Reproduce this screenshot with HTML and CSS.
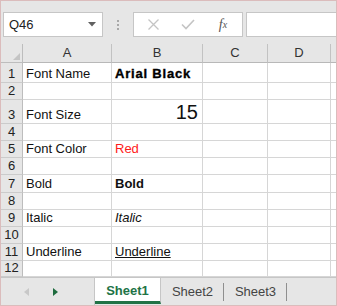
FILE: index.html
```html
<!DOCTYPE html>
<html lang="en">
<head>
  <meta charset="UTF-8">
  <title>Font Styles - Workbook</title>
  <link rel="stylesheet" href="styles.css">
</head>
<body>
  <!-- Formula bar -->
  <div class="toolbar">
    <div class="name-box">
      <span>Q46</span>
      <svg class="caret" width="8" height="5" viewBox="0 0 8 5"><path d="M0 0H8L4 4.5Z" fill="#606060"/></svg>
    </div>
    <div class="grip"><i></i><i></i><i></i></div>
    <div class="fx-buttons">
      <span class="fx-btn w1">
        <svg width="13" height="13" viewBox="0 0 13 13"><path d="M1.5 1.5L11.5 11.5M11.5 1.5L1.5 11.5" stroke="#c4c4c4" stroke-width="1.3" fill="none"/></svg>
      </span>
      <span class="fx-btn w2">
        <svg width="14" height="11" viewBox="0 0 14 11"><path d="M1 5.5L5 9.5L13 1" stroke="#c4c4c4" stroke-width="1.6" fill="none"/></svg>
      </span>
      <span class="fx-btn w3 fx">f<sub>x</sub></span>
    </div>
    <div class="formula-input"></div>
  </div>

  <!-- Sheet grid -->
  <div class="sheet">
    <div class="corner"><span class="corner-mark"></span></div>
    <div class="col-head">A</div>
    <div class="col-head">B</div>
    <div class="col-head">C</div>
    <div class="col-head">D</div>
    <div class="col-head last"></div>

    <div class="row-head">1</div>
    <div class="cell">Font Name</div>
    <div class="cell black">Arial Black</div>
    <div class="cell"></div><div class="cell"></div><div class="cell last"></div>

    <div class="row-head">2</div>
    <div class="cell"></div><div class="cell"></div><div class="cell"></div><div class="cell"></div><div class="cell last"></div>

    <div class="row-head">3</div>
    <div class="cell">Font Size</div>
    <div class="cell big">15</div>
    <div class="cell"></div><div class="cell"></div><div class="cell last"></div>

    <div class="row-head">4</div>
    <div class="cell"></div><div class="cell"></div><div class="cell"></div><div class="cell"></div><div class="cell last"></div>

    <div class="row-head">5</div>
    <div class="cell">Font Color</div>
    <div class="cell red">Red</div>
    <div class="cell"></div><div class="cell"></div><div class="cell last"></div>

    <div class="row-head">6</div>
    <div class="cell"></div><div class="cell"></div><div class="cell"></div><div class="cell"></div><div class="cell last"></div>

    <div class="row-head">7</div>
    <div class="cell">Bold</div>
    <div class="cell bold">Bold</div>
    <div class="cell"></div><div class="cell"></div><div class="cell last"></div>

    <div class="row-head">8</div>
    <div class="cell"></div><div class="cell"></div><div class="cell"></div><div class="cell"></div><div class="cell last"></div>

    <div class="row-head">9</div>
    <div class="cell">Italic</div>
    <div class="cell italic">Italic</div>
    <div class="cell"></div><div class="cell"></div><div class="cell last"></div>

    <div class="row-head">10</div>
    <div class="cell"></div><div class="cell"></div><div class="cell"></div><div class="cell"></div><div class="cell last"></div>

    <div class="row-head">11</div>
    <div class="cell">Underline</div>
    <div class="cell underline">Underline</div>
    <div class="cell"></div><div class="cell"></div><div class="cell last"></div>

    <div class="row-head">12</div>
    <div class="cell"></div><div class="cell"></div><div class="cell"></div><div class="cell"></div><div class="cell last"></div>
  </div>

  <!-- Sheet tabs -->
  <div class="tabbar">
    <div class="tab-nav">
      <svg width="5" height="8" viewBox="0 0 5 8"><path d="M5 0V8L0 4Z" fill="#c8c8c8"/></svg>
      <svg width="5" height="8" viewBox="0 0 5 8"><path d="M0 0V8L5 4Z" fill="#1e6b3e"/></svg>
    </div>
    <div class="tab active">Sheet1</div>
    <div class="tab">Sheet2</div>
    <div class="tab">Sheet3</div>
  </div>
</body>
</html>
```

FILE: styles.css
```css
html, body {
  margin: 0;
  padding: 0;
}
body {
  width: 337px;
  height: 306px;
  box-sizing: border-box;
  border: 1px solid #dbbcbc;
  background: #fff;
  font-family: "Liberation Sans", Arial, sans-serif;
  color: #111;
  overflow: hidden;
}

/* formula bar */
.toolbar {
  height: 43px;
  box-sizing: border-box;
  background: #e6e6e6;
  display: flex;
  align-items: flex-start;
  padding: 11px 0 0 2px;
}
.name-box {
  width: 100px;
  height: 25px;
  box-sizing: border-box;
  background: #fff;
  border: 1px solid #c6c6c6;
  display: flex;
  align-items: center;
  justify-content: space-between;
  padding: 0 6px 0 5px;
  font-size: 13px;
  color: #222;
}
.name-box .caret {
  margin-top: -1px;
}
.grip {
  width: 30px;
  height: 25px;
  display: flex;
  flex-direction: column;
  align-items: center;
  justify-content: center;
  gap: 2px;
}
.grip i {
  width: 2px;
  height: 2px;
  background: #a8a8a8;
}
.fx-buttons {
  width: 110px;
  height: 25px;
  box-sizing: border-box;
  background: #fff;
  border: 1px solid #c6c6c6;
  display: flex;
  align-items: center;
}
.fx-btn {
  display: flex;
  justify-content: center;
  align-items: center;
}
.fx-btn.w1 { width: 38px; }
.fx-btn.w2 { width: 32px; }
.fx-btn.w3 { width: 38px; }
.fx {
  font-family: "Liberation Serif", serif;
  font-style: italic;
  font-size: 14px;
  color: #555;
}
.fx sub {
  font-size: 10px;
  vertical-align: -1px;
}
.formula-input {
  flex: 1;
  height: 25px;
  box-sizing: border-box;
  margin-left: 3px;
  background: #fff;
  border: 1px solid #c6c6c6;
  border-right: none;
}

/* grid */
.sheet {
  display: grid;
  grid-template-columns: 22px 89px 91px 65px 63px 1fr;
  grid-template-rows: 19px 20px 17px 24px 17px 17px 17px 18px 17px 17px 17px 17px 16px;
}
.sheet > div {
  box-sizing: border-box;
  border-right: 1px solid #d6d6d6;
  border-bottom: 1px solid #d6d6d6;
  overflow: hidden;
  white-space: nowrap;
}
.sheet > .last {
  border-right: none;
}
.corner {
  background: #e6e6e6;
  border-right-color: #bdbdbd !important;
  border-bottom-color: #bdbdbd !important;
  position: relative;
}
.corner-mark {
  position: absolute;
  right: 2px;
  bottom: 2px;
  width: 0;
  height: 0;
  border-left: 7px solid transparent;
  border-bottom: 7px solid #c4c4c4;
}
.col-head {
  background: #e6e6e6;
  border-right-color: #c2c2c2 !important;
  border-bottom-color: #b8b8b8 !important;
  font-size: 13px;
  color: #333;
  text-align: center;
  line-height: 18px;
}
.row-head {
  background: #e6e6e6;
  border-right-color: #bdbdbd !important;
  border-bottom-color: #cbcbcb !important;
  font-size: 13px;
  color: #222;
  display: flex;
  align-items: flex-end;
  justify-content: center;
  line-height: 15px;
  padding-bottom: 1px;
}
.cell {
  font-size: 13px;
  line-height: 15px;
  display: flex;
  align-items: flex-end;
  padding: 0 3px 1px;
}
.black {
  font-weight: bold;
  letter-spacing: 0.8px;
  -webkit-text-stroke: 0.35px #000;
  color: #000;
}
.big {
  font-size: 20px;
  line-height: 22px;
  justify-content: flex-end;
  padding-right: 4px;
  padding-bottom: 0;
}
.red { color: #ff1a1a; }
.bold { font-weight: bold; }
.italic { font-style: italic; }
.underline { text-decoration: underline; }

/* sheet tabs */
.tabbar {
  height: 27px;
  background: #e6e6e6;
  border-top: 1px solid #c6c6c6;
  display: flex;
  align-items: stretch;
}
.tab-nav {
  width: 94px;
  display: flex;
  align-items: center;
  gap: 24px;
  padding-left: 23px;
  box-sizing: border-box;
  border-right: 1px solid #c6c6c6;
}
.tab {
  width: 63px;
  display: flex;
  align-items: center;
  justify-content: center;
  font-size: 13px;
  color: #444;
  position: relative;
}
.tab + .tab:not(.active)::after {
  content: "";
  position: absolute;
  right: 0;
  top: 5px;
  bottom: 4px;
  width: 1px;
  background: #8f8f8f;
}
.tab.active {
  width: 66px;
  background: #fff;
  color: #217346;
  font-weight: bold;
  box-sizing: border-box;
  border-right: 1px solid #c6c6c6;
  border-bottom: 3px solid #217346;
  margin-bottom: 1px;
  padding-top: 2px;
}
```
